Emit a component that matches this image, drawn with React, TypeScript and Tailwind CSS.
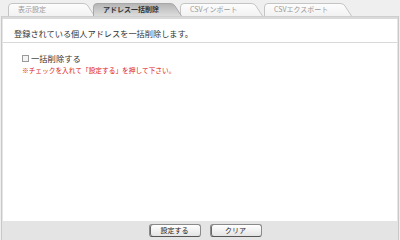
import React from "react";

const F = { fontFamily: '"Noto Sans CJK JP", "Noto Sans", sans-serif' };

function Tab({ w, label, active, ml }: { w: number; label: string; active?: boolean; ml: number }) {
  const H = 13;
  const d = `M0.5,${H} L0.5,4 Q0.5,0.5 4,0.5 L${w - 12},0.5 Q${w - 8},0.5 ${w - 7},3 L${w - 0.5},${H}`;
  return (
    <div className="relative h-[13px] shrink-0" style={{ width: w, marginLeft: ml, zIndex: active ? 2 : 1 }}>
      <svg className="absolute inset-0" width={w} height={H} viewBox={`0 0 ${w} ${H}`}>
        <defs>
          <linearGradient id={`g${label}`} x1="0" y1="0" x2="0" y2="1">
            {active ? (
              <>
                <stop offset="0" stopColor="#b4b4b4" />
                <stop offset="1" stopColor="#dcdcdc" />
              </>
            ) : (
              <>
                <stop offset="0" stopColor="#fdfdfd" />
                <stop offset="1" stopColor="#f2f2f2" />
              </>
            )}
          </linearGradient>
        </defs>
        <path d={d + " Z"} fill={`url(#g${label})`} stroke="none" />
        <path d={d} fill="none" stroke={active ? "#a8a8a8" : "#c4c4c4"} strokeWidth="1" />
      </svg>
      <div
        className={`relative h-full flex items-center pl-[10px] text-[7px] leading-none ${active ? "text-[#333] font-bold" : "text-[#9a9a9a]"}`}
      >
        {label}
      </div>
    </div>
  );
}

function Btn({ label }: { label: string }) {
  return (
    <div className="w-[52px] h-[13px] rounded-[3px] border border-[#8a8a8a] border-b-[#555] bg-gradient-to-b from-[#ffffff] to-[#e4e4e4] flex items-center justify-center text-[7px] text-[#222] leading-none shadow-[inset_1px_0_0_#666]">
      {label}
    </div>
  );
}

export default function App() {
  return (
    <div className="w-[400px] h-[240px] bg-[#efefef] flex flex-col overflow-hidden" style={F}>
      <div className="flex pt-[3px] pl-[8px] h-[16px] shrink-0">
        <Tab w={87} label="表示設定" ml={0} />
        <Tab w={89} label="アドレス一括削除" ml={-2} active />
        <Tab w={83} label="CSVインポート" ml={-2} />
        <Tab w={88} label="CSVエクスポート" ml={1} />
      </div>
      <div className="flex-1 mx-[1px] border-x border-[#c8c8c8] flex flex-col">
        <div className="h-[3px] bg-[#dadada] border-t border-[#cfcfcf] shrink-0" />
        <div className="flex-1 bg-white border-x border-[#e6e6e6] flex flex-col">
          <div className="h-[24px] flex items-center pl-[11px] pt-[6px] text-[8.2px] text-[#333] leading-none border-b border-[#d8d8d8]">
            登録されている個人アドレスを一括削除します。
          </div>
          <div className="pl-[19px] pt-[10px] flex flex-col">
            <div className="flex items-center h-[10px]">
              <div className="w-[7px] h-[7px] border border-[#9a9a9a] bg-[#f4f4f4] mr-[2px]" />
              <span className="text-[8.3px] text-[#333] leading-none">一括削除する</span>
            </div>
            <div className="mt-[4px] text-[6.7px] text-[#e02020] leading-none">
              ※チェックを入れて「設定する」を押して下さい。
            </div>
          </div>
        </div>
        <div className="h-[19px] bg-[#e4e4e4] flex items-center justify-center gap-[9px] pl-[10px] shrink-0">
          <Btn label="設定する" />
          <Btn label="クリア" />
        </div>
      </div>
    </div>
  );
}
